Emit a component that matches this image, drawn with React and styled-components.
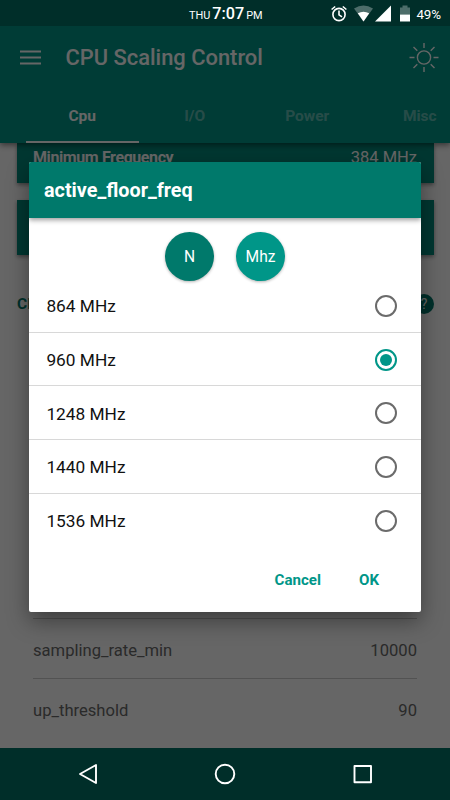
import React from "react";
import styled, { createGlobalStyle } from "styled-components";

const colors = {
  primary: "#009688",
  primaryDark: "#00796b",
  system: "#002e29",
};

const GlobalStyle = createGlobalStyle`
  * {
    box-sizing: border-box;
  }
  body {
    margin: 0;
    font-family: Roboto, "Liberation Sans", sans-serif;
  }
`;

const Screen = styled.div`
  position: relative;
  display: flex;
  flex-direction: column;
  width: 450px;
  height: 800px;
  overflow: hidden;
  background-color: #fff;
`;

const StatusBar = styled.div`
  position: relative;
  z-index: 2;
  flex: none;
  display: flex;
  align-items: center;
  height: 26px;
  padding: 2px 9px 0 189px;
  color: #fff;
  background-color: ${colors.system};
`;

const Clock = styled.div`
  flex: 1;
  display: flex;
  align-items: baseline;
  gap: 2px;
  padding-top: 2px;
  font-size: 16.2px;
  font-weight: 500;
  line-height: 24px;
  white-space: nowrap;
`;

const ClockSmall = styled.span`
  font-size: 10.9px;
  font-weight: 400;
`;

const StatusIcons = styled.svg`
  flex: none;
  width: 84px;
  height: 24px;
  margin-right: 2px;
`;

const Battery = styled.span`
  font-size: 13.4px;
  letter-spacing: -0.1px;
`;

const AppBar = styled.header`
  position: relative;
  z-index: 1;
  flex: none;
  height: 117px;
  background-color: ${colors.primary};
  box-shadow: 0 2px 6px rgba(0, 0, 0, 0.5);
`;

const Toolbar = styled.div`
  display: flex;
  align-items: center;
  height: 63px;
  padding: 0 11px 0 20px;
  color: #fff;
`;

const AppTitle = styled.h1`
  flex: 1;
  margin: 0 0 0 24.5px;
  font-size: 21.9px;
  font-weight: 500;
`;

const Tabs = styled.nav`
  display: flex;
  height: 54px;
  margin-left: 26px;
  overflow: hidden;
`;

const Tab = styled.div`
  flex: none;
  width: 112.5px;
  padding-top: 18px;
  border-bottom: 2.5px solid ${props => (props.active ? "#fff" : "transparent")};
  color: ${props => (props.active ? "#fff" : "rgba(255, 255, 255, 0.4)")};
  font-size: 15.5px;
  font-weight: 700;
  line-height: 18px;
  text-align: center;
`;

const Content = styled.main`
  flex: 1;
  min-height: 0;
  overflow: hidden;
`;

const Card = styled.section`
  display: flex;
  justify-content: space-between;
  height: ${props => props.height}px;
  margin: 0 16px 17px 17px;
  padding: 5px 17px 0 16px;
  color: #fff;
  background-color: #008b7c;
  box-shadow: 0 2px 4px rgba(0, 0, 0, 0.4);
  font-size: 16.5px;
  line-height: 20px;
`;

const CardLabel = styled.span`
  font-size: 16px;
  font-weight: 700;
  line-height: 19px;
  letter-spacing: -0.4px;
`;

const SectionTitle = styled.div`
  display: flex;
  align-items: center;
  justify-content: space-between;
  height: 20px;
  margin: 38px 16px 6px 17px;
  padding-top: 1px;
  color: ${colors.primaryDark};
  font-size: 15.5px;
  font-weight: 700;
`;

const Help = styled.span`
  width: 20px;
  height: 20px;
  border-radius: 50%;
  color: #fff;
  background-color: ${colors.primaryDark};
  font-size: 14px;
  font-weight: 400;
  line-height: 20px;
  text-align: center;
`;

const Setting = styled.div`
  display: flex;
  align-items: center;
  justify-content: space-between;
  height: 60px;
  margin: 0 33px;
  padding-top: 4px;
  border-bottom: 1px solid ${props => (props.last ? "transparent" : "#ccc")};
  color: #6a6a6a;
  font-size: 16.6px;
`;

const NavBar = styled.footer`
  position: relative;
  z-index: 2;
  flex: none;
  height: 52px;
  background-color: ${colors.system};
`;

const Overlay = styled.div`
  position: absolute;
  z-index: 1;
  top: 0;
  right: 0;
  bottom: 0;
  left: 0;
  padding: 161.5px 29px 0;
  background-color: rgba(0, 0, 0, 0.6);
`;

const Dialog = styled.div`
  display: flex;
  flex-direction: column;
  height: 450.5px;
  border-radius: 2px;
  overflow: hidden;
  background-color: #fff;
  box-shadow: 0 9px 22px rgba(0, 0, 0, 0.4);
`;

const DialogTitle = styled.h2`
  flex: none;
  height: 56.5px;
  margin: 0;
  padding-left: 15px;
  color: #fff;
  background-color: ${colors.primaryDark};
  box-shadow: 0 2px 5px rgba(0, 0, 0, 0.4);
  font-size: 19.8px;
  font-weight: 700;
  line-height: 58px;
`;

const Units = styled.div`
  flex: none;
  display: flex;
  justify-content: center;
  gap: 22px;
  height: 61px;
  padding: 14px 0 0;
`;

const Unit = styled.button`
  width: 49px;
  height: 49px;
  padding: 0;
  border: 0;
  border-radius: 50%;
  color: #fff;
  background-color: ${props => (props.dark ? colors.primaryDark : colors.primary)};
  box-shadow: 0 1px 3px rgba(0, 0, 0, 0.3);
  font-family: inherit;
  font-size: 15.6px;
  line-height: 51px;
`;

const Options = styled.div`
  flex: none;
`;

const Option = styled.div`
  display: flex;
  align-items: center;
  justify-content: space-between;
  height: 53.7px;
  padding: 1px 24px 0 17.4px;
  border-bottom: 1px solid ${props => (props.last ? "transparent" : "#d8d8d8")};
  color: #111;
  font-size: 17.3px;
`;

const OptionLabel = styled.span`
  padding-top: 1px;
`;

const Radio = styled.span`
  display: flex;
  align-items: center;
  justify-content: center;
  width: 22px;
  height: 22px;
  border: 2px solid ${props => (props.checked ? colors.primary : "#6b6b6b")};
  border-radius: 50%;
`;

const Dot = styled.span`
  width: 12px;
  height: 12px;
  border-radius: 50%;
  background-color: ${colors.primary};
`;

const Actions = styled.div`
  display: flex;
  justify-content: flex-end;
  gap: 38px;
  padding: 24px 42px 0 0;
`;

const Action = styled.button`
  padding: 0;
  border: 0;
  color: ${colors.primary};
  background: none;
  font-family: inherit;
  font-size: 15.1px;
  font-weight: 700;
  line-height: 18px;
`;

const frequencies = ["864 MHz", "960 MHz", "1248 MHz", "1440 MHz", "1536 MHz"];

const MenuIcon = () => (
  <svg width="21" height="16" viewBox="0 0 21 16" stroke="#fff" strokeWidth="2.1">
    <path d="M0 1.500h21M0 7.500h21M0 13.500h21" />
  </svg>
);

const SunIcon = () => (
  <svg width="30" height="30" viewBox="-15 -15 30 30" fill="none" stroke="#fff" strokeWidth="1.4">
    <circle cy="-.5" r="6.6" />
    <path d="M0-15v5M0 9v5M-14.500-.5h5M9.500-.5h5M-10.500-11l3.800 3.800M6.700 6.200l3.800 3.800M-10.500 10l3.800-3.800M6.700-7.200l3.800-3.800" />
  </svg>
);

// alarm, wifi, signal and battery share one strip
const StatusGlyphs = () => (
  <StatusIcons viewBox="330 1.500 84 24">
    <g fill="none" stroke="#fff" strokeWidth="1.600">
      <circle cx="339" cy="14" r="6.100" />
      <path d="M339 10v4.300l3 2M331.600 9l3.600-3M346.400 9l-3.600-3" />
    </g>
    <path d="M354 8q9.500-6 19 0l-9.500 13z" fill="#4d6d6a" />
    <path d="M357.800 12.700q5.700-3 11.400 0l-5.700 8.300z" fill="#fff" />
    <path d="M375 21L391 5v16z" fill="#fff" />
    <path d="M400 14V7h2.500V5h5v2h2.500v7z" fill="#4d6d6a" />
    <path d="M400 14h10v7h-10z" fill="#fff" />
  </StatusIcons>
);

const NavIcons = () => (
  <svg width="450" height="52" viewBox="0 748 450 52" fill="none" stroke="#fff" strokeWidth="1.900" strokeLinejoin="round">
    <path d="M80 774L96 765v18z" />
    <circle cx="225" cy="774" r="9.300" />
    <path d="M354.500 766h16.500v16.300h-16.500z" />
  </svg>
);

class App extends React.Component {
  state = {
    selected: "960 MHz"
  };

  render() {
    return (
      <Screen>
        <GlobalStyle />
        <StatusBar>
          <Clock>
            <ClockSmall>THU</ClockSmall>
            7:07
            <ClockSmall>PM</ClockSmall>
          </Clock>
          <StatusGlyphs />
          <Battery>49%</Battery>
        </StatusBar>
        <AppBar>
          <Toolbar>
            <MenuIcon />
            <AppTitle>CPU Scaling Control</AppTitle>
            <SunIcon />
          </Toolbar>
          <Tabs>
            <Tab active>Cpu</Tab>
            <Tab>I/O</Tab>
            <Tab>Power</Tab>
            <Tab>Misc</Tab>
          </Tabs>
        </AppBar>
        <Content>
          <Card height={40}>
            <CardLabel>Minimum Frequency</CardLabel>
            <span>384 MHz</span>
          </Card>
          <Card height={55} />
          <SectionTitle>
            CP
            <Help>?</Help>
          </SectionTitle>
          <Setting />
          <Setting />
          <Setting />
          <Setting />
          <Setting />
          <Setting>
            <span>sampling_rate_min</span>
            <span>10000</span>
          </Setting>
          <Setting last>
            <span>up_threshold</span>
            <span>90</span>
          </Setting>
        </Content>
        <NavBar>
          <NavIcons />
        </NavBar>
        <Overlay>
          <Dialog>
            <DialogTitle>active_floor_freq</DialogTitle>
            <Units>
              <Unit dark>N</Unit>
              <Unit>Mhz</Unit>
            </Units>
            <Options>
              {frequencies.map((frequency, i) => (
                <Option
                  key={frequency}
                  last={i === frequencies.length - 1}
                  onClick={() => this.setState({ selected: frequency })}
                >
                  <OptionLabel>{frequency}</OptionLabel>
                  <Radio checked={this.state.selected === frequency}>
                    {this.state.selected === frequency && <Dot />}
                  </Radio>
                </Option>
              ))}
            </Options>
            <Actions>
              <Action>Cancel</Action>
              <Action>OK</Action>
            </Actions>
          </Dialog>
        </Overlay>
      </Screen>
    );
  }
}

export default App;
